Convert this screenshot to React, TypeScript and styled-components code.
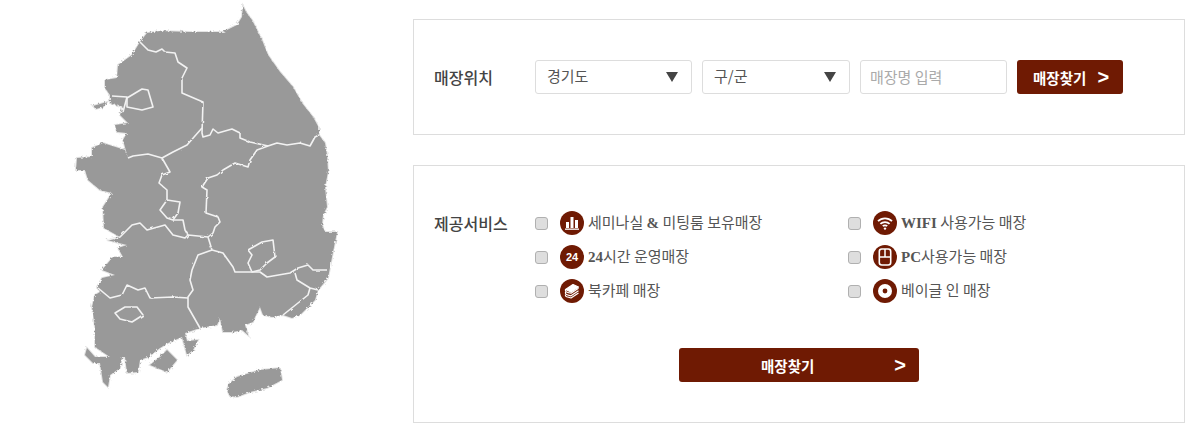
import React from "react";
import styled, { createGlobalStyle } from "styled-components";

const Global = createGlobalStyle`
  html, body { margin: 0; padding: 0; background: #fff; }
  body { font-family: "Noto Sans CJK KR", "Liberation Sans", sans-serif; color: #444; }
  * { box-sizing: border-box; }
`;

const Page = styled.div`
  display: flex;
  width: 1193px;
  height: 431px;
  overflow: hidden;
`;
const MapColumn = styled.div`
  width: 413px;
  flex: none;
`;
const Forms = styled.div`
  width: 772px;
  flex: none;
  padding-top: 19px;
  display: flex;
  flex-direction: column;
  gap: 30px;
`;
const Panel = styled.section<{ $h: number; $top: number }>`
  height: ${(p) => p.$h}px;
  padding: ${(p) => p.$top}px 20px 0;
  border: 1px solid #ddd;
  display: flex;
  align-items: flex-start;
`;
const Label = styled.div<{ $lh: number }>`
  width: 101px;
  flex: none;
  font-size: 16px;
  font-weight: 500;
  line-height: ${(p) => p.$lh}px;
  color: #444;
`;
const FieldRow = styled.div`
  display: flex;
  gap: 10px;
`;
const SelectBox = styled.div<{ $w: number }>`
  position: relative;
  width: ${(p) => p.$w}px;
  height: 34px;
  border: 1px solid #ddd;
  border-radius: 3px;
  padding-left: 11px;
  font-size: 15px;
  line-height: 30px;
  color: #555;
  &::after {
    content: "";
    position: absolute;
    right: 13px;
    top: 11px;
    border-left: 6px solid transparent;
    border-right: 6px solid transparent;
    border-top: 10px solid #444;
  }
`;
const SearchInput = styled.input`
  width: 147px;
  height: 34px;
  border: 1px solid #ddd;
  border-radius: 3px;
  padding: 0 0 2px 9px;
  font: 15px "Noto Sans CJK KR", sans-serif;
  outline: none;
  &::placeholder { color: #aaa; opacity: 1; }
`;
const FindButton = styled.button<{ $w: number; $pad: number; $arrowGap: number }>`
  width: ${(p) => p.$w}px;
  height: 34px;
  border: 0;
  border-radius: 3px;
  background: #6f1a03;
  color: #fff;
  padding: 0 ${(p) => p.$pad}px 0 16px;
  font: 700 14.5px "Noto Sans CJK KR", sans-serif;
  display: flex;
  align-items: center;
  justify-content: ${(p) => (p.$arrowGap ? "flex-start" : "space-between")};
  gap: ${(p) => p.$arrowGap}px;
`;
const Arrow = styled.span`
  font: 700 20px "Liberation Sans", sans-serif;
  line-height: 1;
`;
const WideButton = styled(FindButton)`
  margin: 0 0 0 144px;
  padding: 0 13px 0 82px;
`;
const ServicesWrap = styled.div`
  flex: 1;
  display: flex;
  flex-direction: column;
  gap: 40px;
`;
const ServiceGrid = styled.div`
  display: grid;
  grid-template-columns: 313px 1fr;
  grid-auto-rows: 34px;
`;
const Service = styled.label`
  display: flex;
  align-items: center;
  font-size: 15px;
  color: #555;
  white-space: nowrap;
`;
const Check = styled.input`
  appearance: none;
  width: 13px;
  height: 13px;
  margin: 0 12px 0 0;
  border: 1px solid #b0b0b0;
  border-radius: 3px;
  background: #dedede;
`;
const IconDisc = styled.span`
  width: 24px;
  height: 24px;
  flex: none;
  margin-right: 4px;
  border-radius: 50%;
  background: #6f1a03;
  display: flex;
  align-items: center;
  justify-content: center;
  color: #fff;
  svg { display: block; }
`;
const DiscNum = styled.span`
  font: 700 11px "Liberation Sans", sans-serif;
`;
const Latin = styled.b`
  font-family: "Liberation Serif", serif;
  font-weight: 700;
  font-size: 15px;
`;
const ServiceText = styled.span`
  position: relative;
  top: -2px;
`;

const OUTLINE =
  "M243 6 L246 12 252 20 258 32 262 40 268 55 280 72 293 87 302 103 313 117 319 128 319 135 325 143 327 155 328 172 325 187 327 207 323 215 322 225 325 232 337 232 332 257 328 278 318 290 315 300 300 315 292 318 283 315 272 317 263 315 260 307 255 317 253 322 245 325 248 335 242 330 233 332 223 332 220 318 217 325 200 328 185 333 187 341 198 340 193 350 187 355 182 337 168 343 160 348 148 357 140 360 138 372 127 373 125 357 122 357 120 368 110 375 108 387 103 382 100 363 93 363 85 355 87 348 95 357 110 357 95 347 95 327 92 307 95 295 100 292 97 287 102 278 115 275 102 270 113 257 123 257 118 248 127 245 107 240 120 237 104 228 103 207 112 193 100 190 88 180 85 170 76 170 77 158 92 157 92 148 103 143 125 150 128 158 123 140 127 133 117 132 115 125 128 123 120 115 123 107 110 103 110 95 105 88 105 80 117 78 118 65 132 55 140 42 147 33 160 31 190 32 223 32 237 25 242 17 Z";

const BORDERS = [
  "M140 42 148 50 156 52 162 49 165 52 175 53 178 62 187 68 182 78 182 93 203 102 202 133 203 137 210 135 213 129 218 133 232 129 240 133 240 138 250 142 268 146 277 143 287 145 300 143 310 146 315 137 319 135",
  "M268 146 257 150 250 160 248 167 235 163 223 170 217 175 208 178 202 187 207 190 206 213 218 217 220 222 215 227 213 233 208 237",
  "M202 128 187 145 173 152 162 158 148 154 133 156 128 158",
  "M162 158 170 172 162 175 159 183 167 190 167 200 160 210 167 218 173 220 178 213 180 202 167 200",
  "M107 240 120 237 132 225 140 223 147 230 165 225 173 235 185 238 188 235 208 237",
  "M173 220 183 220 185 230 188 235",
  "M208 237 212 250 223 253 233 267 235 272 250 272 260 272 267 277 290 273 298 268 308 265 313 270 327 270",
  "M212 250 198 255 192 270 190 280 193 290 188 297 188 307 200 328",
  "M98 288 110 298 122 295 127 285 138 290 145 288 150 298 173 297 188 298",
  "M295 273 297 280 310 288 308 295 293 307 283 315 M310 288 318 290",
  "M248 250 262 242 273 240 275 257 267 263 260 270 252 272 248 263 252 255 Z",
  "M115 313 125 307 137 307 143 315 132 322 120 319 Z",
  "M127 98 142 89 148 90 153 107 142 110 127 107 Z",
  "M112 96 127 97 123 112",
];

const LAND_EXTRA = [
  "M93 106 107 102 103 107 96 109Z",
  "M150 365 160 357 167 350 177 360 167 372Z",
  "M227 390 229 384 237 377 260 370 280 368 282 380 267 388 250 392 237 397 230 396Z",
];

const KoreaMap = () => (
  <svg width="413" height="431" viewBox="0 0 413 431" aria-hidden="true">
    <defs>
      <filter id="rough" x="-5%" y="-5%" width="110%" height="110%">
        <feTurbulence type="fractalNoise" baseFrequency="0.5" numOctaves="2" seed="4" />
        <feDisplacementMap in="SourceGraphic" scale="3.5" />
      </filter>
      <filter id="roughLine" x="-5%" y="-5%" width="110%" height="110%">
        <feTurbulence type="fractalNoise" baseFrequency="0.2" numOctaves="1" seed="9" />
        <feDisplacementMap in="SourceGraphic" scale="2.5" />
      </filter>
    </defs>
    <g filter="url(#rough)">
      <path d={OUTLINE} fill="#e4e4e4" stroke="#e4e4e4" strokeWidth="2" />
      {LAND_EXTRA.map((d) => (
        <path key={d} d={d} fill="#e4e4e4" stroke="#e4e4e4" strokeWidth="2" />
      ))}
      <path d={OUTLINE} fill="#999" />
      {LAND_EXTRA.map((d) => (
        <path key={d} d={d} fill="#999" />
      ))}
    </g>
    <g filter="url(#roughLine)">
      {BORDERS.map((d) => (
        <path key={d} d={d} fill="none" stroke="#f2f2f2" strokeWidth="1.6" strokeLinejoin="round" />
      ))}
    </g>
  </svg>
);

const BarsIcon = () => (
  <svg width="16" height="16" viewBox="0 0 16 16" fill="#fff">
    <rect x="2" y="7" width="3" height="6" />
    <rect x="6.5" y="2" width="3" height="11" />
    <rect x="11" y="5" width="3" height="8" />
    <rect x="1" y="13.5" width="14" height="1.3" />
  </svg>
);
const WifiIcon = () => (
  <svg width="16" height="16" viewBox="0 0 16 16" fill="none" stroke="#fff" strokeWidth="1.8">
    <path d="M1 6.2a10 10 0 0 1 14 0" />
    <path d="M3.4 8.9a6.6 6.6 0 0 1 9.2 0" />
    <path d="M5.8 11.2a3.1 3.1 0 0 1 4.4 0" />
    <circle cx="8" cy="13.6" r="1.2" fill="#fff" stroke="none" />
  </svg>
);
const BooksIcon = () => (
  <svg width="18" height="18" viewBox="0 0 18 18" fill="none" stroke="#fff" strokeWidth="1.2" strokeLinejoin="round">
    <path d="M2.5 7.5 10 2.5 15.5 5 8 10Z" fill="#fff" />
    <path d="M2.5 7.5v1.4c0 .8 1 1.2 5.5 2.3l7.5-5" />
    <path d="M2.5 10v1.5c0 .8 1 1.2 5.5 2.3l7.5-5" />
    <path d="M2.5 12.6v1.2c0 .7 1 1.2 5.5 2.2l7.5-5" />
  </svg>
);
const MouseIcon = () => (
  <svg width="16" height="18" viewBox="0 0 16 18" fill="none" stroke="#fff" strokeWidth="1.6">
    <rect x="2.3" y="1" width="11.4" height="16" rx="2.5" />
    <path d="M8 1v8M2.5 9h11" strokeWidth="1.5" />
  </svg>
);
const DiscIcon = () => (
  <svg width="18" height="18" viewBox="0 0 18 18">
    <circle cx="9" cy="9" r="7" fill="#fff" />
    <circle cx="9" cy="9" r="2.4" fill="#6f1a03" />
  </svg>
);

const Find = ({ label }: { label: string }) => <span>{label}</span>;

export default function App() {
  return (
    <Page>
      <Global />
      <MapColumn>
        <KoreaMap />
      </MapColumn>
      <Forms>
        <Panel $h={116} $top={40}>
          <Label $lh={34}>매장위치</Label>
          <FieldRow>
            <SelectBox $w={157}>경기도</SelectBox>
            <SelectBox $w={148}>구/군</SelectBox>
            <SearchInput placeholder="매장명 입력" />
            <FindButton $w={106} $pad={13} $arrowGap={11}>
              <Find label="매장찾기" />
              <Arrow>&gt;</Arrow>
            </FindButton>
          </FieldRow>
        </Panel>
        <Panel $h={258} $top={40}>
          <Label $lh={34}>제공서비스</Label>
          <ServicesWrap>
            <ServiceGrid>
              <Service>
                <Check type="checkbox" />
                <IconDisc><BarsIcon /></IconDisc>
                <ServiceText>세미나실 <Latin>&amp;</Latin> 미팅룸 보유매장</ServiceText>
              </Service>
              <Service>
                <Check type="checkbox" />
                <IconDisc><WifiIcon /></IconDisc>
                <ServiceText><Latin>WIFI</Latin> 사용가능 매장</ServiceText>
              </Service>
              <Service>
                <Check type="checkbox" />
                <IconDisc><DiscNum>24</DiscNum></IconDisc>
                <ServiceText><Latin>24</Latin>시간 운영매장</ServiceText>
              </Service>
              <Service>
                <Check type="checkbox" />
                <IconDisc><MouseIcon /></IconDisc>
                <ServiceText><Latin>PC</Latin>사용가능 매장</ServiceText>
              </Service>
              <Service>
                <Check type="checkbox" />
                <IconDisc><BooksIcon /></IconDisc>
                <ServiceText>북카페 매장</ServiceText>
              </Service>
              <Service>
                <Check type="checkbox" />
                <IconDisc><DiscIcon /></IconDisc>
                <ServiceText>베이글 인 매장</ServiceText>
              </Service>
            </ServiceGrid>
            <WideButton $w={240} $pad={13} $arrowGap={0}>
              <Find label="매장찾기" />
              <Arrow>&gt;</Arrow>
            </WideButton>
          </ServicesWrap>
        </Panel>
      </Forms>
    </Page>
  );
}
